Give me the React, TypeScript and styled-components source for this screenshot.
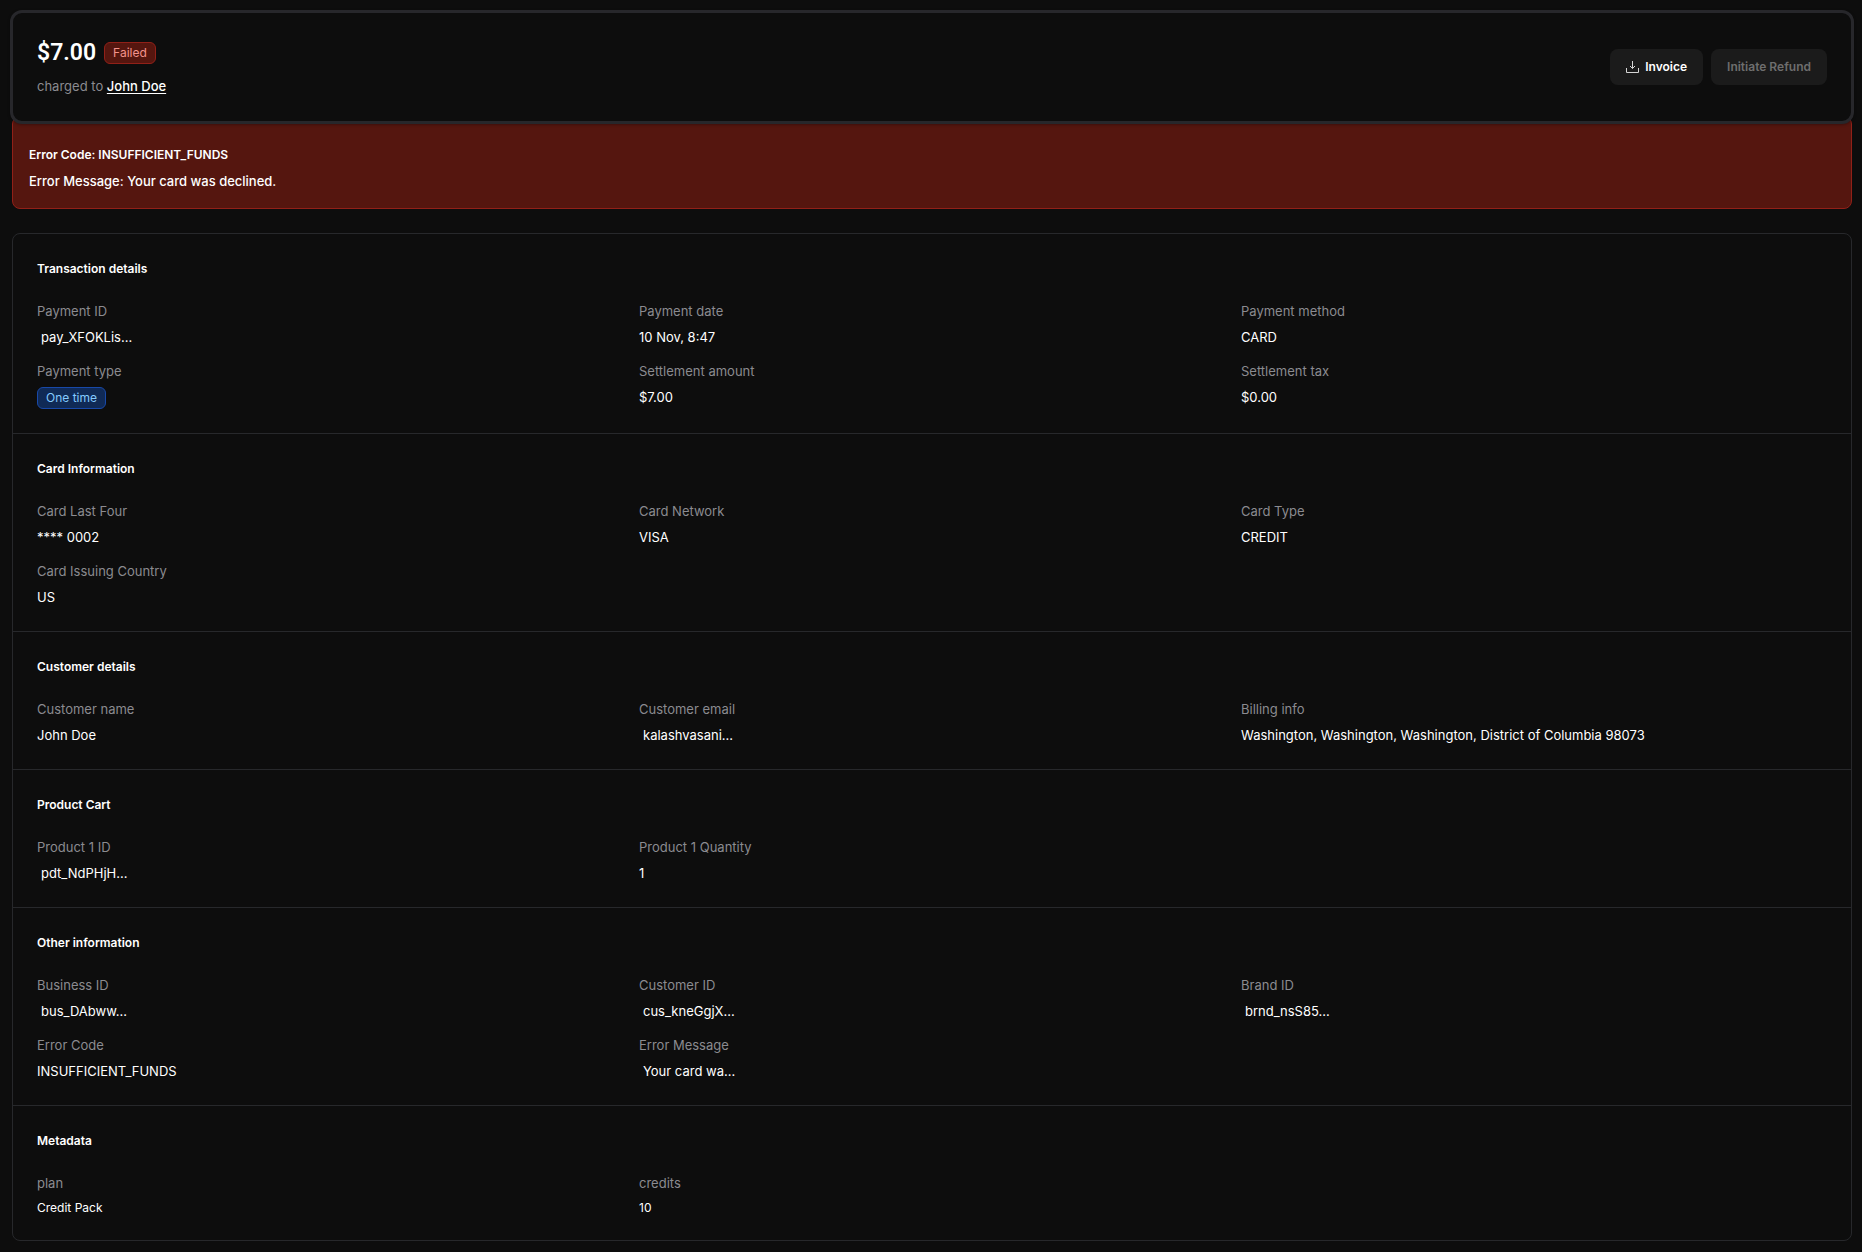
import React from "react";
import styled, { createGlobalStyle, css } from "styled-components";

const sans = `Inter, "Liberation Sans", sans-serif`;
const display = `Roboto, "Liberation Sans", sans-serif`;

const GlobalStyle = createGlobalStyle`
  *, *::before, *::after { box-sizing: border-box; }
  body {
    margin: 0;
    background: #0d0d0d;
    color: #ffffff;
    font-family: ${sans};
    font-size: 13px;
    line-height: 20px;
  }
  h1, h2, p, dl, dt, dd { margin: 0; }
`;

const Page = styled.main`
  padding: 10px 10px 11px 12px;
`;

const Header = styled.header`
  position: relative;
  z-index: 1;
  display: flex;
  align-items: center;
  justify-content: space-between;
  margin: 0 -2px;
  padding: 24px 24px 25px;
  border: 3px solid #27272b;
  border-radius: 12px;
  background: #0d0d0d;
  box-shadow: 0 1px 3px rgba(0, 0, 0, 0.3);
`;

const Summary = styled.div`
  display: flex;
  flex-direction: column;
  gap: 7px;
`;

const AmountRow = styled.div`
  display: flex;
  align-items: center;
  gap: 8px;
`;

const Amount = styled.h1`
  font-family: ${display};
  font-size: 23px;
  line-height: 32px;
  font-weight: 600;
`;

const tones = {
  error: css`
    background: #55160f;
    border-color: #912018;
    color: #f3938c;
  `,
  info: css`
    background: #102a56;
    border-color: #1849a9;
    color: #84caff;
  `,
};

const Badge = styled.span<{ $tone: keyof typeof tones }>`
  display: inline-flex;
  align-items: center;
  height: 22px;
  padding: 0 8px;
  border: 1px solid;
  border-radius: 6px;
  font-size: 12px;
  line-height: 20px;
  ${({ $tone }) => tones[$tone]}
`;

const Charged = styled.p`
  color: #8b8b90;
  font-size: 13px;
`;

const CustomerLink = styled.a`
  color: #ffffff;
  font-weight: 500;
  text-decoration: underline;
  text-underline-offset: 2px;
`;

const Actions = styled.div`
  display: flex;
  gap: 8px;
`;

const Button = styled.button`
  display: inline-flex;
  align-items: center;
  gap: 6px;
  height: 36px;
  padding: 0 16px;
  border: 0;
  border-radius: 8px;
  background: #1b1b1b;
  color: #ffffff;
  font-family: ${sans};
  font-size: 12px;
  line-height: 20px;
  font-weight: 600;
  cursor: pointer;

  &:disabled {
    color: #6e6e6e;
    cursor: default;
  }
`;

const ErrorBox = styled.section`
  display: flex;
  flex-direction: column;
  gap: 6px;
  margin-top: -8px;
  padding: 28px 16px 17px;
  border: 1px solid #912018;
  border-radius: 8px;
  background: #55160f;
`;

const ErrorLine = styled.p<{ $strong?: boolean }>`
  font-size: ${({ $strong }) => ($strong ? 12 : 13)}px;
  font-weight: ${({ $strong }) => ($strong ? 600 : 500)};
`;

const Panel = styled.div`
  margin-top: 24px;
  border: 1px solid #27282b;
  border-radius: 8px;
`;

const SectionBox = styled.section`
  padding: 24px;

  & + & {
    border-top: 1px solid #27282b;
  }
`;

const SectionTitle = styled.h2`
  margin-bottom: 24px;
  font-size: 12px;
  line-height: 21px;
  font-weight: 600;
`;

const Grid = styled.dl`
  display: grid;
  grid-template-columns: repeat(3, minmax(0, 1fr));
  gap: 16px;
`;

const Label = styled.dt`
  margin-bottom: 7px;
  color: #8b8b90;
  font-size: 13px;
  line-height: 17px;
`;

const Value = styled.dd<{ $kind?: Kind }>`
  display: flex;
  font-size: ${({ $kind }) => ($kind === "meta" ? 12 : 13)}px;
  line-height: ${({ $kind }) => ($kind === "meta" ? 17 : 20)}px;
  padding-left: ${({ $kind }) => ($kind === "id" ? 4 : 0)}px;
`;

type Kind = "id" | "meta" | "badge";
type Field = { label: string; value: string; kind?: Kind };

const sections: { title: string; fields: Field[] }[] = [
  {
    title: "Transaction details",
    fields: [
      { label: "Payment ID", value: "pay_XFOKLis...", kind: "id" },
      { label: "Payment date", value: "10 Nov, 8:47" },
      { label: "Payment method", value: "CARD" },
      { label: "Payment type", value: "One time", kind: "badge" },
      { label: "Settlement amount", value: "$7.00" },
      { label: "Settlement tax", value: "$0.00" },
    ],
  },
  {
    title: "Card Information",
    fields: [
      { label: "Card Last Four", value: "**** 0002" },
      { label: "Card Network", value: "VISA" },
      { label: "Card Type", value: "CREDIT" },
      { label: "Card Issuing Country", value: "US" },
    ],
  },
  {
    title: "Customer details",
    fields: [
      { label: "Customer name", value: "John Doe" },
      { label: "Customer email", value: "kalashvasani...", kind: "id" },
      {
        label: "Billing info",
        value: "Washington, Washington, Washington, District of Columbia 98073",
      },
    ],
  },
  {
    title: "Product Cart",
    fields: [
      { label: "Product 1 ID", value: "pdt_NdPHjH...", kind: "id" },
      { label: "Product 1 Quantity", value: "1" },
    ],
  },
  {
    title: "Other information",
    fields: [
      { label: "Business ID", value: "bus_DAbww...", kind: "id" },
      { label: "Customer ID", value: "cus_kneGgjX...", kind: "id" },
      { label: "Brand ID", value: "brnd_nsS85...", kind: "id" },
      { label: "Error Code", value: "INSUFFICIENT_FUNDS" },
      { label: "Error Message", value: "Your card wa...", kind: "id" },
    ],
  },
  {
    title: "Metadata",
    fields: [
      { label: "plan", value: "Credit Pack", kind: "meta" },
      { label: "credits", value: "10", kind: "meta" },
    ],
  },
];

const DownloadIcon = () => (
  <svg width="13" height="14" viewBox="0 0 13 14" fill="none" stroke="#d4d4d4" aria-hidden="true">
    <path d="M6.5 1v7.5M4 6l2.5 2.5L9 6M.5 8v4.5h12V8" />
  </svg>
);

const DetailField = ({ label, value, kind }: Field) => (
  <div>
    <Label>{label}</Label>
    <Value $kind={kind}>{kind === "badge" ? <Badge $tone="info">{value}</Badge> : value}</Value>
  </div>
);

export default function App() {
  return (
    <>
      <GlobalStyle />
      <Page>
        <Header>
          <Summary>
            <AmountRow>
              <Amount>$7.00</Amount>
              <Badge $tone="error">Failed</Badge>
            </AmountRow>
            <Charged>
              charged to <CustomerLink href="#customer">John Doe</CustomerLink>
            </Charged>
          </Summary>
          <Actions>
            <Button type="button">
              <DownloadIcon />
              Invoice
            </Button>
            <Button type="button" disabled>
              Initiate Refund
            </Button>
          </Actions>
        </Header>
        <ErrorBox>
          <ErrorLine $strong>Error Code: INSUFFICIENT_FUNDS</ErrorLine>
          <ErrorLine>Error Message: Your card was declined.</ErrorLine>
        </ErrorBox>
        <Panel>
          {sections.map(({ title, fields }) => (
            <SectionBox key={title}>
              <SectionTitle>{title}</SectionTitle>
              <Grid>
                {fields.map((field) => (
                  <DetailField key={field.label} {...field} />
                ))}
              </Grid>
            </SectionBox>
          ))}
        </Panel>
      </Page>
    </>
  );
}
